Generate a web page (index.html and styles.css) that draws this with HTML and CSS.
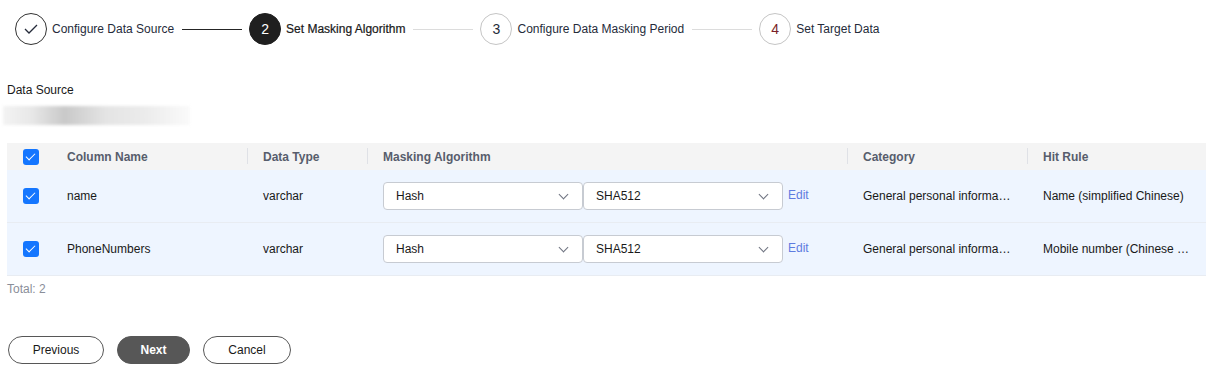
FILE: index.html
```html
<!DOCTYPE html>
<html lang="en">
<head>
    <meta charset="UTF-8">
    <title>Set Masking Algorithm</title>
    <link rel="stylesheet" href="styles.css">
</head>
<body>
    <div class="page">
        <div class="steps">
            <div class="step done">
                <span class="step-icon">
                    <svg width="14" height="10" viewBox="0 0 14 10"><path d="M1 5 L5 9 L13 1" fill="none" stroke="#252b3a" stroke-width="1.3"/></svg>
                </span>
                <span class="step-label">Configure Data Source</span>
            </div>
            <div class="step-line dark"></div>
            <div class="step active">
                <span class="step-icon">2</span>
                <span class="step-label">Set Masking Algorithm</span>
            </div>
            <div class="step-line"></div>
            <div class="step">
                <span class="step-icon">3</span>
                <span class="step-label">Configure Data Masking Period</span>
            </div>
            <div class="step-line"></div>
            <div class="step">
                <span class="step-icon">4</span>
                <span class="step-label">Set Target Data</span>
            </div>
        </div>

        <div class="field">
            <div class="field-label">Data Source</div>
            <div class="field-value"></div>
        </div>

        <div class="table">
            <div class="row head">
                <div class="cell c-check"><span class="checkbox"></span></div>
                <div class="cell c-name">Column Name</div>
                <div class="cell c-type">Data Type</div>
                <div class="cell c-algo">Masking Algorithm</div>
                <div class="cell c-cat">Category</div>
                <div class="cell c-rule">Hit Rule</div>
            </div>
            <div class="row">
                <div class="cell c-check"><span class="checkbox"></span></div>
                <div class="cell c-name">name</div>
                <div class="cell c-type">varchar</div>
                <div class="cell c-algo">
                    <div class="select">Hash<span class="arrow"></span></div>
                    <div class="select">SHA512<span class="arrow"></span></div>
                    <a class="edit">Edit</a>
                </div>
                <div class="cell c-cat"><span class="ellipsis">General personal informa…</span></div>
                <div class="cell c-rule"><span class="ellipsis">Name (simplified Chinese)</span></div>
            </div>
            <div class="row">
                <div class="cell c-check"><span class="checkbox"></span></div>
                <div class="cell c-name">PhoneNumbers</div>
                <div class="cell c-type">varchar</div>
                <div class="cell c-algo">
                    <div class="select">Hash<span class="arrow"></span></div>
                    <div class="select">SHA512<span class="arrow"></span></div>
                    <a class="edit">Edit</a>
                </div>
                <div class="cell c-cat"><span class="ellipsis">General personal informa…</span></div>
                <div class="cell c-rule"><span class="ellipsis">Mobile number (Chinese …</span></div>
            </div>
        </div>
        <div class="total">Total: 2</div>

        <div class="actions">
            <button class="btn">Previous</button>
            <button class="btn primary">Next</button>
            <button class="btn">Cancel</button>
        </div>
    </div>
</body>
</html>
```

FILE: styles.css
```css
body {
    margin: 0;
    font-family: 'Liberation Sans', Arial, sans-serif;
    font-size: 12px;
    color: #252b3a;
    background-color: white;
}
.page {
    padding: 13px 10px 0 7px;
}
.steps {
    display: flex;
    align-items: center;
    padding-left: 8px;
    height: 32px;
}
.step {
    display: flex;
    align-items: center;
}
.step-icon {
    width: 30px;
    height: 30px;
    border: 1px solid #c5c5c5;
    border-radius: 50%;
    display: flex;
    align-items: center;
    justify-content: center;
    font-size: 14px;
    color: #252b3a;
}
.step.done .step-icon {
    border-color: #333;
}
.step.active .step-icon {
    background-color: #1f1f1f;
    border-color: #1f1f1f;
    color: white;
}
.step:last-child .step-icon {
    color: #7a1f2a;
}
.step-label {
    margin-left: 5px;
    color: #252b3a;
}
.step.active .step-label {
    color: #191919;
    -webkit-text-stroke: 0.2px #191919;
}
.step-line {
    width: 60px;
    height: 1px;
    background-color: #dcdcdc;
    margin: 0 7px 0 8px;
}
.step-line.dark {
    background-color: #252525;
}
.field {
    margin-top: 38px;
}
.field-label {
    color: #191919;
    line-height: 14px;
}
.field-value {
    margin-top: 9px;
    margin-left: -4px;
    width: 187px;
    height: 19px;
    background: linear-gradient(90deg, #f3f3f3 0%, #e8e8e8 15%, #c9c9c9 33%, #e4e4e4 55%, #ebebeb 75%, #fafafa 100%);
    filter: blur(1.5px);
}
.table {
    margin-top: 18px;
}
.row {
    display: flex;
    align-items: center;
    height: 52px;
    background-color: #eef5ff;
    border-bottom: 1px solid #e8ecf2;
}
.row.head {
    height: 27px;
    background-color: #f4f4f4;
    border-bottom: none;
    font-weight: bold;
    color: #575d6c;
}
.cell {
    box-sizing: border-box;
    padding-left: 16px;
    display: flex;
    align-items: center;
    position: relative;
    white-space: nowrap;
}
.row.head .cell + .cell:not(.c-name)::before {
    content: '';
    position: absolute;
    left: 0;
    top: 5px;
    width: 1px;
    height: 16px;
    background-color: #dfe1e6;
}
.row.head .cell {
    height: 27px;
}
.c-check { width: 44px; }
.c-name { width: 196px; }
.c-type { width: 120px; }
.c-algo { width: 480px; }
.c-cat { width: 180px; }
.c-rule { width: 179px; padding-right: 16px; }
.row:not(.head) .c-name,
.row:not(.head) .c-type {
    color: #191919;
}
.checkbox {
    width: 16px;
    height: 16px;
    border-radius: 3px;
    background-color: #1476ff;
    position: relative;
}
.checkbox::after {
    content: '';
    position: absolute;
    left: 5px;
    top: 2px;
    width: 4px;
    height: 8px;
    border: solid white;
    border-width: 0 1.5px 1.5px 0;
    transform: rotate(45deg);
}
.select {
    box-sizing: border-box;
    width: 200px;
    height: 28px;
    background-color: white;
    border: 1px solid #c7cbd2;
    border-radius: 4px;
    padding: 0 12px;
    display: flex;
    align-items: center;
    justify-content: space-between;
    color: #191919;
}
.arrow {
    width: 6px;
    height: 6px;
    border: solid #6e7380;
    border-width: 0 1px 1px 0;
    transform: rotate(45deg);
    margin-top: -4px;
    margin-right: 3px;
}
.edit {
    color: #5e7ce0;
    margin-left: 5px;
    margin-top: -3px;
}
.ellipsis {
    display: block;
    color: #191919;
}
.total {
    margin-top: 6px;
    color: #8a8e99;
    line-height: 14px;
}
.actions {
    display: flex;
    gap: 13px;
    margin-top: 40px;
    padding-left: 1px;
}
.btn {
    font-family: 'Liberation Sans', Arial, sans-serif;
    font-size: 12px;
    height: 28px;
    border-radius: 14px;
    border: 1px solid #575757;
    background-color: white;
    color: #191919;
    padding: 0;
    width: 96px;
}
.btn.primary {
    width: 73px;
    background-color: #575757;
    color: white;
    font-weight: bold;
}
.btn:last-child {
    width: 88px;
}
```
